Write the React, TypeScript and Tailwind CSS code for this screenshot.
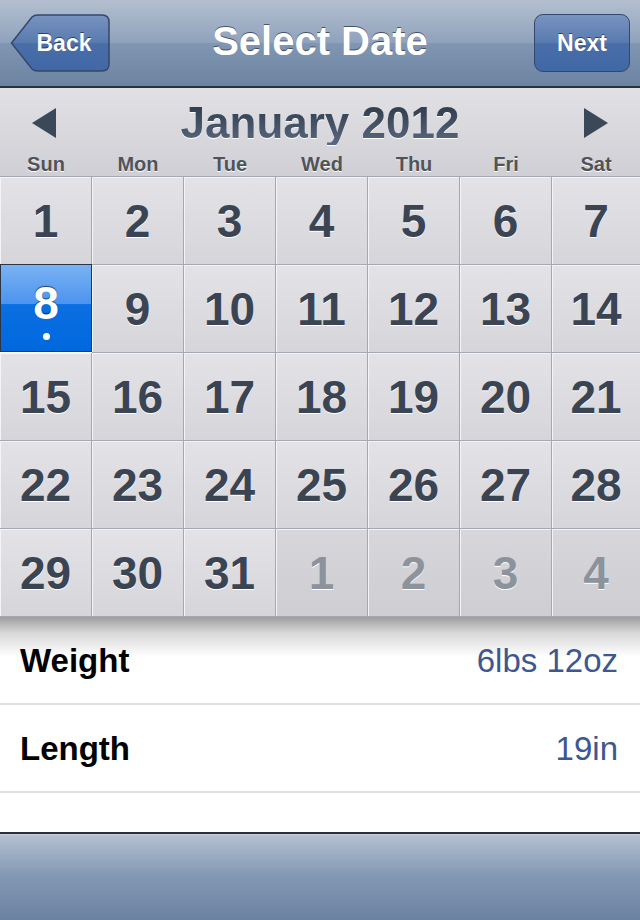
import React from "react";

const font = { fontFamily: '"Liberation Sans", Arial, sans-serif' };

const dayNames = ["Sun", "Mon", "Tue", "Wed", "Thu", "Fri", "Sat"];

// 5 weeks of January 2012, trailing February days flagged
const weeks: { n: number; other?: boolean }[][] = [
    [1, 2, 3, 4, 5, 6, 7].map((n) => ({ n })),
    [8, 9, 10, 11, 12, 13, 14].map((n) => ({ n })),
    [15, 16, 17, 18, 19, 20, 21].map((n) => ({ n })),
    [22, 23, 24, 25, 26, 27, 28].map((n) => ({ n })),
    [
        { n: 29 },
        { n: 30 },
        { n: 31 },
        { n: 1, other: true },
        { n: 2, other: true },
        { n: 3, other: true },
        { n: 4, other: true },
    ],
];

const selected = 8;

function DayCell({ n, other, last }: { n: number; other?: boolean; last: boolean }) {
    const isSel = !other && n === selected;
    if (isSel) {
        return (
            <div className="relative flex h-[88px] flex-col items-center justify-center border border-[#2b3546] bg-[linear-gradient(to_bottom,#7ab2f2_0%,#4c94ee_45%,#0a6fe2_46%,#0068de_100%)] -mt-px pt-[4px]">
                <span className="text-[46px] font-bold leading-none text-white [text-shadow:0_-1px_1px_rgba(0,0,0,0.6)]">
                    {n}
                </span>
                <span className="mt-[7px] h-[7px] w-[7px] rounded-full bg-white" />
            </div>
        );
    }
    return (
        <div
            className={`flex h-[88px] items-center justify-center border-b border-[#a4a8b1] shadow-[inset_1px_1px_0_#f4f4f6] ${
                last ? "" : "border-r"
            } ${
                other
                    ? "bg-[linear-gradient(to_bottom,#d6d6db,#cdcdd2)]"
                    : "bg-[linear-gradient(to_bottom,#e3e3e7,#d5d5da)]"
            }`}
        >
            <span
                className={`text-[46px] font-bold leading-none [text-shadow:0_1px_0_#fff] ${
                    other ? "text-[#8c939c]" : "text-[#3a4453]"
                }`}
            >
                {n}
            </span>
        </div>
    );
}

export default function App() {
    return (
        <div className="flex h-[920px] w-[640px] flex-col overflow-hidden bg-white" style={font}>
            {/* Nav bar */}
            <div className="flex h-[88px] shrink-0 items-center justify-between border-b-2 border-[#2a313c] bg-[linear-gradient(to_bottom,#b3bfcf_0%,#8fa2bc_50%,#8096b3_50%,#6c83a1_100%)] pl-[10px] pr-[10px]">
                <button className="relative h-[58px] w-[100px]">
                    <svg className="absolute inset-0" width="100" height="58" viewBox="0 0 100 58">
                        <defs>
                            <linearGradient id="btn" x1="0" y1="0" x2="0" y2="1">
                                <stop offset="0" stopColor="#7894c0" />
                                <stop offset="0.5" stopColor="#587aaf" />
                                <stop offset="0.5" stopColor="#4a6ea8" />
                                <stop offset="1" stopColor="#4068a6" />
                            </linearGradient>
                        </defs>
                        <path
                            d="M1.5 29 L22 3 Q24 1 28 1 H92 Q99 1 99 8 V50 Q99 57 92 57 H28 Q24 57 22 55 Z"
                            fill="url(#btn)"
                            stroke="#35476a"
                            strokeWidth="1.5"
                        />
                    </svg>
                    <span className="relative ml-[8px] text-[23px] font-bold text-white [text-shadow:0_-1px_0_rgba(0,0,0,0.5)]">
                        Back
                    </span>
                </button>
                <h1 className="-mt-[4px] ml-[-4px] text-[40px] font-bold text-white [text-shadow:0_-1px_0_rgba(30,40,60,0.7)]">
                    Select Date
                </h1>
                <button className="h-[58px] w-[96px] rounded-[9px] border-[1.5px] border-[#35476a] bg-[linear-gradient(to_bottom,#7894c0_0%,#587aaf_50%,#4a6ea8_50%,#4068a6_100%)] text-[23px] font-bold text-white [text-shadow:0_-1px_0_rgba(0,0,0,0.5)]">
                    Next
                </button>
            </div>

            {/* Calendar header */}
            <div className="flex h-[89px] shrink-0 flex-col border-b border-[#a4a8b1] bg-[linear-gradient(to_bottom,#e1e1e5,#cfcfd5)]">
                <div className="flex h-[66px] items-center justify-between px-[32px] pt-[4px]">
                    <svg width="24" height="30" viewBox="0 0 24 30">
                        <path d="M0 15 L24 0 V30 Z" fill="#3b4858" />
                    </svg>
                    <span className="bg-[linear-gradient(to_bottom,#2b3748,#5a6a80)] bg-clip-text text-[44px] font-bold leading-none text-transparent [filter:drop-shadow(0_1px_0_#fff)]">
                        January 2012
                    </span>
                    <svg width="24" height="30" viewBox="0 0 24 30">
                        <path d="M24 15 L0 0 V30 Z" fill="#3b4858" />
                    </svg>
                </div>
                <div className="grid grid-cols-[92px_92px_92px_92px_92px_92px_88px]">
                    {dayNames.map((d) => (
                        <span
                            key={d}
                            className="text-center text-[20px] font-bold leading-none text-[#505358] [text-shadow:0_1px_0_#fff]"
                        >
                            {d}
                        </span>
                    ))}
                </div>
            </div>

            {/* Day grid */}
            <div className="grid shrink-0 grid-cols-[92px_92px_92px_92px_92px_92px_88px]">
                {weeks.map((w, wi) =>
                    w.map((d, di) => (
                        <DayCell key={`${wi}-${di}`} n={d.n} other={d.other} last={di === 6} />
                    ))
                )}
            </div>

            {/* Details table */}
            <div className="flex flex-1 flex-col bg-[linear-gradient(to_bottom,#9e9e9e_0px,#d8d8d8_16px,#ffffff_40px)]">
                <div className="flex h-[88px] items-center justify-between border-b-2 border-[#e0e0e0] pl-[20px] pr-[22px] pt-[2px]">
                    <span className="text-[33px] font-bold text-black">Weight</span>
                    <span className="text-[33px] text-[#3d5791]">6lbs 12oz</span>
                </div>
                <div className="flex h-[88px] items-center justify-between border-b-2 border-[#e0e0e0] pl-[20px] pr-[22px] pt-[2px]">
                    <span className="text-[33px] font-bold text-black">Length</span>
                    <span className="text-[33px] text-[#3d5791]">19in</span>
                </div>
            </div>

            {/* Bottom toolbar */}
            <div className="h-[88px] shrink-0 border-t-2 border-[#2b2e33] bg-[linear-gradient(to_bottom,#c9d1dc_0px,#b3bfcf_2px,#8197b3_50%,#6c82a1_100%)]" />
        </div>
    );
}
